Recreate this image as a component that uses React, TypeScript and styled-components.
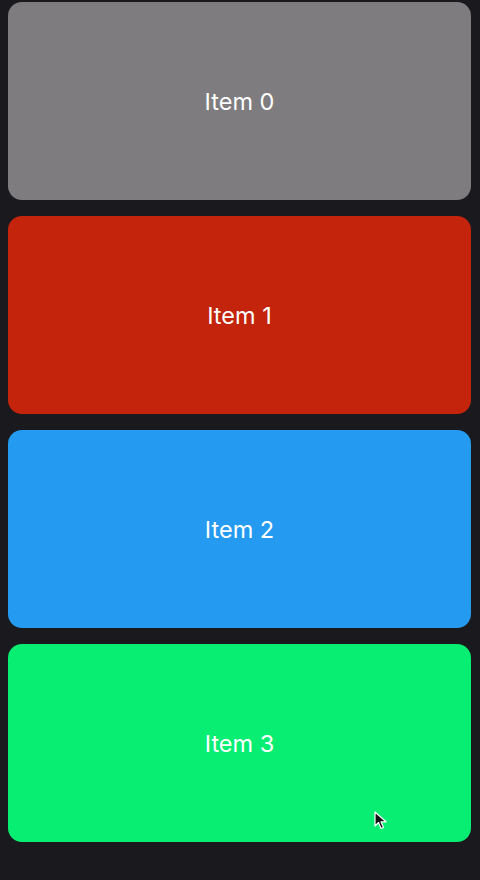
import React from 'react';
import styled, { createGlobalStyle } from 'styled-components';

const items = [
  { label: 'Item 0', color: '#7e7c7e' },
  { label: 'Item 1', color: '#c4240b' },
  { label: 'Item 2', color: '#259af1' },
  { label: 'Item 3', color: '#08ee73' },
];

const GlobalStyle = createGlobalStyle`
  html, body {
    margin: 0;
    padding: 0;
    background: #1a1a1e;
  }
  body {
    font-family: Inter, "Noto Sans", sans-serif;
  }
`;

const Page = styled.div`
  position: relative;
  min-height: 880px;
  padding: 2px 9px 0 8px;
  box-sizing: border-box;
`;

const List = styled.div`
  display: flex;
  flex-direction: column;
  gap: 16px;
`;

const Card = styled.div<{ $bg: string }>`
  height: 198px;
  border-radius: 14px;
  background: ${p => p.$bg};
  display: flex;
  align-items: center;
  justify-content: center;
  color: #ffffff;
  font-size: 23.5px;
  font-weight: 400;
`;

const Cursor = styled.svg`
  position: absolute;
  left: 374px;
  top: 811px;
  width: 14px;
  height: 20px;
`;

const App = () => (
  <>
    <GlobalStyle />
    <Page>
      <List>
        {items.map(item => (
          <Card key={item.label} $bg={item.color}>
            {item.label}
          </Card>
        ))}
      </List>
      <Cursor viewBox="0 0 14 20">
        <path
          d="M1 1 L1 15 L4.5 11.5 L7 17.5 L9.5 16.5 L7 10.8 L12 10.8 Z"
          fill="#111"
          stroke="#fff"
          strokeWidth="1.2"
          strokeLinejoin="round"
        />
      </Cursor>
    </Page>
  </>
);

export default App;
